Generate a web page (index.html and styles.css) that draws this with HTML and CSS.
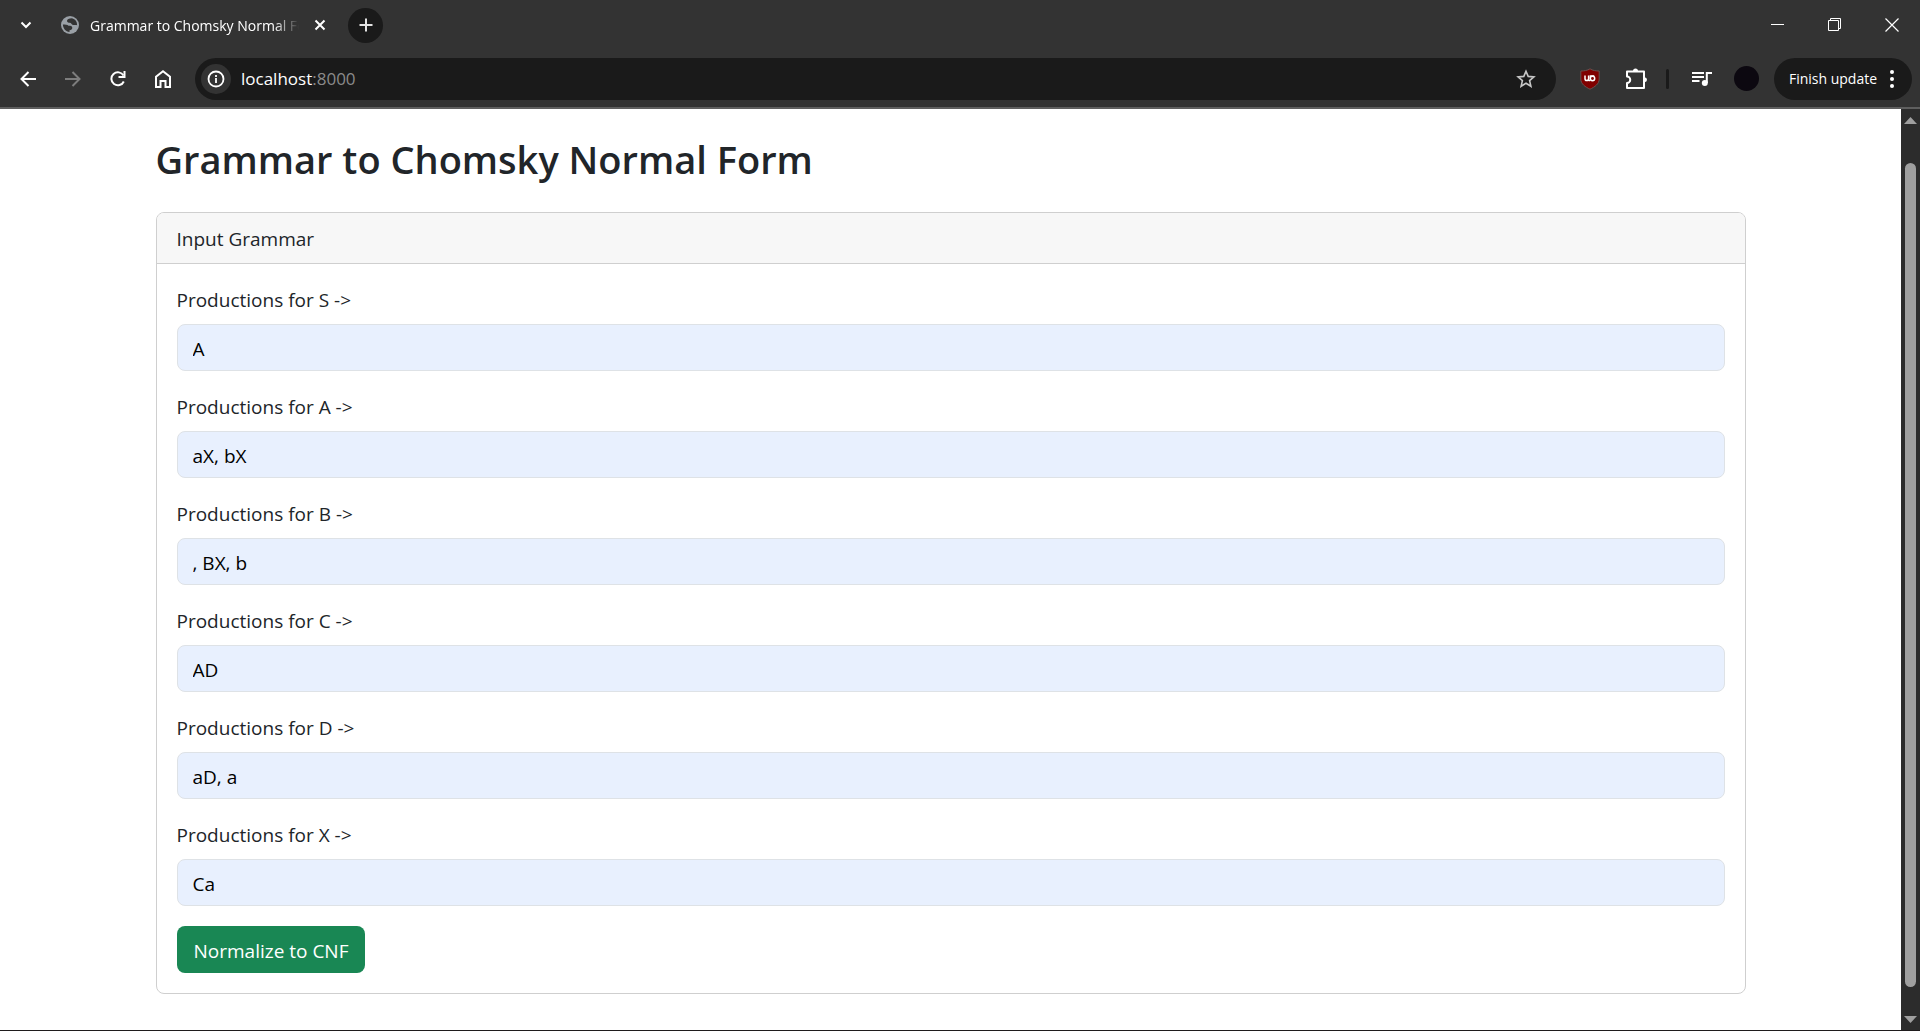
FILE: index.html
```html
<!DOCTYPE html>
<html lang="en">
<head>
<meta charset="utf-8">
<title>Grammar to Chomsky Normal Form</title>
<link rel="stylesheet" href="styles.css">
</head>
<body>
<header class="browser">
  <div class="tabstrip">
    <button class="tab-search" aria-label="Search tabs"><svg width="12" height="8" viewBox="0 0 12 8"><path d="M1.500 1.500 6 6l4.500-4.500" fill="none" stroke="#fff" stroke-width="2"/></svg></button>
    <div class="tab">
      <svg width="18" height="18" viewBox="0 0 18 18"><circle cx="9" cy="9" r="9" fill="#9aa0a6"/><path d="M11 2.200C8 2.300 6 3 6 4.800c0 1.500 1.200 2 2.800 2 1.500.100 1.700 2 3.200 2.200 1.500.200 2.500-.500 4.100.200C16.200 5.500 14.500 3 11 2.200zM1.900 8.500C2 12.500 4.800 15.800 8.500 16.100v-1.900c1.700-.200 2.800-1.200 2.800-2.500 0-1.700-1.800-1.900-3.800-1.900C6.500 8.500 4 8.500 1.900 8.500z" fill="#333"/></svg>
      <span class="tab-title">Grammar to Chomsky Normal Form</span>
      <button class="tab-close" aria-label="Close tab"><svg width="12" height="12" viewBox="0 0 12 12"><path d="M1.500 1.500l9 9M10.500 1.500l-9 9" stroke="#fff" stroke-width="2"/></svg></button>
    </div>
    <button class="new-tab" aria-label="New tab"><svg width="14" height="14" viewBox="0 0 14 14"><path d="M7 0.500v13M0.500 7h13" stroke="#e3e3e3" stroke-width="2"/></svg></button>
    <div class="window-controls">
      <button aria-label="Minimize"><svg width="14" height="14" viewBox="0 0 14 14"><path d="M0 6.500h13" stroke="#fff"/></svg></button>
      <button aria-label="Restore"><svg width="14" height="14" viewBox="0 0 14 14"><path d="M.5 2.500h10v10H.5zM2.500 2.500v-2h10v10h-2" fill="none" stroke="#fff"/></svg></button>
      <button aria-label="Close"><svg width="14" height="14" viewBox="0 0 14 14"><path d="M.5.5l13 13M13.500.5l-13 13" stroke="#fff" stroke-width="1.200"/></svg></button>
    </div>
  </div>
  <div class="toolbar">
    <div class="nav">
      <button aria-label="Back"><svg width="16" height="16" viewBox="0 0 16 16"><path d="M8.500 1 1.500 8l7 7M1.500 8H16" fill="none" stroke="#fff" stroke-width="2"/></svg></button>
      <button aria-label="Forward"><svg width="16" height="16" viewBox="0 0 16 16"><path d="M7.500 1l7 7-7 7M14.500 8H0" fill="none" stroke="#7d7d7d" stroke-width="2"/></svg></button>
      <button aria-label="Reload"><svg width="16" height="16" viewBox="0 0 16 16"><path d="M13.800 10.500A6.500 6.500 0 1 1 13.500 4.500" fill="none" stroke="#fff" stroke-width="2"/><path d="M14.500 0v6H8.500" fill="none" stroke="#fff" stroke-width="2"/></svg></button>
      <button aria-label="Home"><svg width="16" height="18" viewBox="0 0 16 18"><path d="M1 17V6.700L8 1.300l7 5.400V17h-4.500v-6h-5v6z" fill="none" stroke="#fff" stroke-width="2"/></svg></button>
    </div>
    <div class="omnibox">
      <button class="site-info" aria-label="Site information"><svg width="18" height="18" viewBox="0 0 18 18"><circle cx="9" cy="9" r="7.500" fill="none" stroke="#fff" stroke-width="1.800"/><path d="M9 8v5M9 5v2" stroke="#fff" stroke-width="1.800"/></svg></button>
      <span class="url">localhost<span class="port">:8000</span></span>
      <button class="star" aria-label="Bookmark this page"><svg width="20" height="20" viewBox="0 0 20 20"><path d="M10 2.200l2.200 5.200 5.700.500-4.300 3.700 1.300 5.600-4.900-3-4.900 3 1.300-5.600L2.100 7.900l5.700-.500z" fill="none" stroke="#c7c7c7" stroke-width="1.600"/></svg></button>
    </div>
    <div class="extensions">
      <button class="ublock" aria-label="uBlock Origin"><svg width="20" height="22" viewBox="0 0 20 22"><path d="M10 .8C7.500 2.500 4 3 .8 3v8c0 5 4.500 8 9.200 10.200C14.700 19 19.200 16 19.200 11V3C16 3 12.500 2.500 10 .8z" fill="#800000" stroke="#67514f"/><path d="M5 7.500v3.200a1.800 1.800 0 0 0 3.600 0V7.500M8.600 12.500h1.600" fill="none" stroke="#fff" stroke-width="1.500"/><circle cx="12.500" cy="10.500" r="2.200" fill="none" stroke="#fff" stroke-width="1.500"/><path d="M10.300 10.500V7.800h4" fill="none" stroke="#fff" stroke-width="1.300"/></svg></button>
      <button class="puzzle" aria-label="Extensions"><svg width="22" height="22" viewBox="0 0 22 22"><path d="M2 3.500h17v16.500H2v-5a3.200 3.200 0 0 0 0-6.500z" fill="none" stroke="#fff" stroke-width="2" stroke-linejoin="round"/><path d="M8 3a2.500 2.500 0 0 1 5 0zM19.500 9.200a2.500 2.500 0 0 1 0 5z" fill="#fff"/></svg></button>
      <span class="divider"></span>
      <button class="media" aria-label="Media controls"><svg width="20" height="16" viewBox="0 0 20 16"><path d="M0 2h12M0 6h12M0 10h7.500M14.800 12V2H20" fill="none" stroke="#fff" stroke-width="2"/><circle cx="12.800" cy="12" r="3" fill="#fff"/></svg></button>
      <button class="profile" aria-label="Profile"></button>
    </div>
    <button class="update">Finish update<svg width="4" height="18" viewBox="0 0 4 18"><g fill="#fff"><circle cx="2" cy="2" r="2"/><circle cx="2" cy="9" r="2"/><circle cx="2" cy="16" r="2"/></g></svg></button>
  </div>
</header>
<div class="viewport">
  <main class="page">
    <div class="container">
      <h1>Grammar to Chomsky Normal Form</h1>
      <section class="card">
        <div class="card-header">Input Grammar</div>
        <form class="card-body">
          <div class="field"><label for="s">Productions for S -&gt;</label><input id="s" type="text" value="A"></div>
          <div class="field"><label for="a">Productions for A -&gt;</label><input id="a" type="text" value="aX, bX"></div>
          <div class="field"><label for="b">Productions for B -&gt;</label><input id="b" type="text" value=", BX, b"></div>
          <div class="field"><label for="c">Productions for C -&gt;</label><input id="c" type="text" value="AD"></div>
          <div class="field"><label for="d">Productions for D -&gt;</label><input id="d" type="text" value="aD, a"></div>
          <div class="field"><label for="x">Productions for X -&gt;</label><input id="x" type="text" value="Ca"></div>
          <button class="submit" type="button">Normalize to CNF</button>
        </form>
      </section>
    </div>
  </main>
  <div class="scrollbar" aria-hidden="true">
    <svg width="13" height="7" viewBox="0 0 13 7"><path d="M6.500 0 13 7H0z" fill="#9f9f9f"/></svg>
    <div class="thumb"></div>
    <svg width="13" height="7" viewBox="0 0 13 7"><path d="M0 0h13L6.500 7z" fill="#9f9f9f"/></svg>
  </div>
</div>
</body>
</html>
```
FILE: styles.css
```css
* { box-sizing: border-box; }
body {
  margin: 0;
  min-height: 100vh;
  display: flex;
  flex-direction: column;
  font-family: "Segoe UI", "Open Sans", "Noto Sans", sans-serif;
  background: #fff;
  color: #212529;
}
button {
  font: inherit;
  color: inherit;
  border: 0;
  padding: 0;
  background: none;
}
svg { display: block; flex: none; }

/* Browser window frame */
.browser {
  background: #333;
  color: #fff;
  border-bottom: 2px solid #5f5f5f;
}
.browser button {
  display: flex;
  align-items: center;
  justify-content: center;
  flex: none;
}
.tabstrip {
  display: flex;
  align-items: center;
  height: 50px;
  padding-left: 8px;
}
.tab-search { width: 35px; height: 35px; }
.tab {
  display: flex;
  align-items: center;
  width: 287px;
  padding-left: 18px;
}
.tab-title {
  width: 209px;
  margin: 0 15px 0 11px;
  overflow: hidden;
  white-space: nowrap;
  font-size: 14px;
  mask-image: linear-gradient(to right, #000 88%, transparent);
}
.new-tab {
  width: 35px;
  height: 35px;
  margin-left: 18px;
  border-radius: 50%;
  background: #1a1a1a;
}
.tab-close { width: 12px; height: 20px; }
.window-controls { display: flex; margin-left: auto; }
.window-controls button { width: 57px; height: 50px; }
.toolbar {
  display: flex;
  align-items: center;
  height: 57px;
  padding: 0 8px 0 5px;
}
.nav { display: flex; }
.nav button { width: 45px; height: 45px; }
.omnibox {
  display: flex;
  align-items: center;
  flex: 1;
  height: 42px;
  margin-left: 10px;
  padding: 0 20px 0 6px;
  border-radius: 21px;
  background: #1a1a1a;
}
.site-info {
  width: 30px;
  height: 30px;
  border-radius: 50%;
  background: #333;
}
.url { margin-left: 10px; font-size: 17px; }
.port { color: #8a8a8a; }
.star { margin-left: auto; }
.extensions { display: flex; align-items: center; padding: 0 15px 0 24px; }
.puzzle { margin-left: 25px; }
.divider {
  width: 3px;
  height: 20px;
  margin: 0 23px 0 19px;
  border-radius: 2px;
  background: #1a1a1a;
}
.profile {
  width: 25px;
  height: 25px;
  margin-left: 22px;
  border-radius: 50%;
  background: #0c0810;
}
.update {
  gap: 13px;
  height: 42px;
  width: 138px;
  padding-right: 3px;
  border-radius: 21px;
  background: #1a1a1a;
  font-size: 14px;
}

/* Page */
.viewport {
  flex: 1;
  display: flex;
  border-bottom: 1px solid #1f1c1d;
}
.page { flex: 1; min-width: 0; padding: 20px 30px 36px; }
.container { max-width: 1590px; margin: 0 auto; }
h1 {
  margin: 0 0 25px;
  padding-top: 3px;
  font-size: 38px;
  font-weight: 600;
  line-height: 55px;
}
.card { border: 1px solid #cfcfcf; border-radius: 8px; }
.card-header {
  padding: 10px 20px 8px;
  border-bottom: 1px solid #cfcfcf;
  border-radius: 7px 7px 0 0;
  background: #f7f7f7;
  font-size: 19px;
  line-height: 32px;
}
.card-body { padding: 20px; font-size: 19px; line-height: 32px; }
.field { margin-bottom: 20px; }
.field label { display: block; margin-bottom: 8px; }
.field input {
  display: block;
  width: 100%;
  height: 47px;
  padding: 8px 15px 6px;
  border: 1px solid #dee2e6;
  border-radius: 8px;
  background: #e8f0fe;
  color: #000;
  font: inherit;
}
.submit {
  display: block;
  height: 47px;
  padding: 2px 17px 0;
  border-radius: 8px;
  background: #198754;
  color: #fff;
}

.scrollbar {
  display: flex;
  flex-direction: column;
  align-items: center;
  width: 19px;
  padding: 8px 0 7px;
  background: #2c2c2c;
}
.thumb {
  flex: 1;
  width: 11px;
  margin: 39px 0 29px;
  border-radius: 6px;
  background: #9f9f9f;
}
```
